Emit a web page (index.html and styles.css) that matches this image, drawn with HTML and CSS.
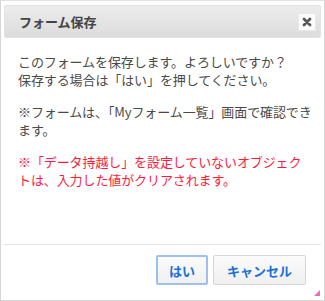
FILE: index.html
```html
<!DOCTYPE html>
<html>
<head>
    <title>フォーム保存</title>
    <link rel="stylesheet" href="styles.css">
</head>
<body>
    <div class="dialog">
        <div class="titlebar">
            <span class="title">フォーム保存</span>
            <button class="close" title="閉じる">
                <svg width="10" height="10" viewBox="0 0 10 10"><path d="M2 2 L8 8 M8 2 L2 8" stroke="#555" stroke-width="2.8" stroke-linecap="round"/></svg>
            </button>
        </div>
        <div class="content">
            <p>このフォームを保存します。よろしいですか？<br>保存する場合は「はい」を押してください。</p>
            <p>※フォームは、「Myフォーム一覧」画面で確認できます。</p>
            <p class="warn">※「データ持越し」を設定していないオブジェクトは、入力した値がクリアされます。</p>
        </div>
        <div class="buttons">
            <button class="btn primary">はい</button>
            <button class="btn">キャンセル</button>
        </div>
        <span class="grip"></span>
    </div>
</body>
</html>
```

FILE: styles.css
```css
html, body { margin: 0; padding: 0; }
body { font-family: "Noto Sans CJK JP", "Noto Sans", sans-serif; font-size: 13px; color: #4a4a4a; background: #fff; }
.dialog { position: relative; box-sizing: border-box; width: 325px; height: 301px; border: 1px solid #d6d6d6; border-top-color: #e2e2e2; padding: 4px 3px; display: flex; flex-direction: column; background: #fff; }
.titlebar { display: flex; align-items: center; justify-content: space-between; height: 33px; box-sizing: border-box; padding: 0 4px 0 14px; background: linear-gradient(#ececec, #dcdcdc); border: 1px solid #e2e2e2; border-radius: 2px; }
.title { font-weight: bold; color: #444; font-size: 13px; }
.close { width: 18px; height: 18px; padding: 0; border: 1px solid #e8e8e8; background: #fbfbfb; display: flex; align-items: center; justify-content: center; }
.content { flex: 1; padding: 15px 8px 0 14px; }
.content p { margin: 0 0 14px 0; line-height: 18px; letter-spacing: -0.1px; }
.content .warn { color: #ff1a3c; }
.buttons { border-top: 1px solid #e4e4e4; display: flex; justify-content: flex-end; gap: 5px; padding: 10px 15px 11px 0; }
.btn { font-family: inherit; font-size: 13px; font-weight: bold; color: #1b6fd8; background: linear-gradient(#fbfbfb, #f0f0f0); border: 1px solid #d6d6d6; border-radius: 2px; height: 30px; padding: 0 13px; white-space: nowrap; }
.btn.primary { border: 2px solid #9fc0ef; width: 52px; padding: 0; }
.grip { position: absolute; right: 4px; bottom: 4px; width: 0; height: 0; border-left: 6px solid transparent; border-bottom: 6px solid #f06cb8; }
```
